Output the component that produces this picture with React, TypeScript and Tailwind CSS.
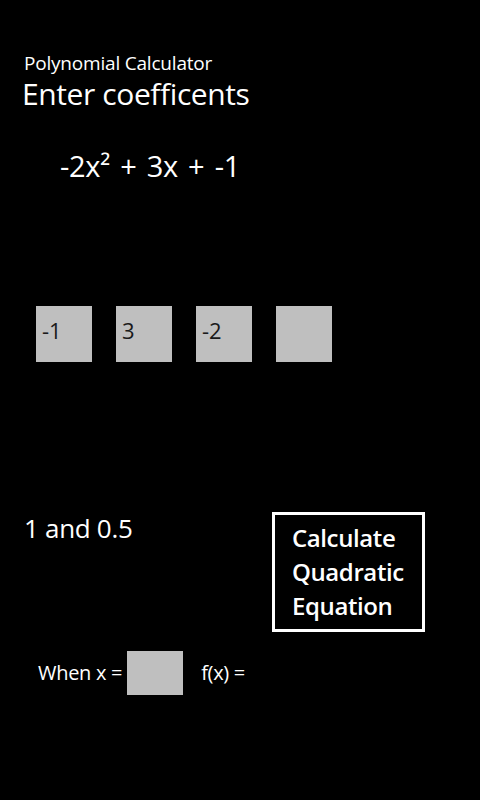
export default function App() {
  const coeffs = ["-1", "3", "-2", ""];
  return (
    <div
      className="w-[480px] h-[800px] bg-black text-white overflow-hidden"
      style={{ fontFamily: '"Open Sans", "Noto Sans", sans-serif' }}
    >
      <div className="pt-[50px] pl-6">
        <div className="text-[19px] leading-[26px] tracking-[-0.2px]">Polynomial Calculator</div>
        <div className="text-[30px] leading-[36px] -ml-[2px] tracking-[-0.4px]">Enter coefficents</div>
      </div>

      <div className="pl-[60px] mt-[36px] text-[29px] leading-[36px] tracking-[-0.3px] [word-spacing:3px]">
        -2x² + 3x + -1
      </div>

      <div className="flex gap-6 pl-9 mt-[122px]">
        {coeffs.map((c, i) => (
          <div
            key={i}
            className="w-14 h-14 bg-[#bfbfbf] text-[#1a1a1a] text-[22px] leading-[30px] pl-[6px] pt-[9px]"
          >
            {c}
          </div>
        ))}
      </div>

      <div className="flex items-start mt-[150px] pl-6">
        <div className="text-[26px] leading-[32px] tracking-[-0.3px]">1 and 0.5</div>
        <div className="ml-auto mr-[55px] w-[153px] h-[120px] border-[3px] border-white pl-[17px] pt-[6px] text-[24px] leading-[34px] font-semibold tracking-[-0.4px]">
          Calculate
          <br />
          Quadratic
          <br />
          Equation
        </div>
      </div>

      <div className="flex items-center mt-[19px] pl-[38px] text-[20px]">
        <span className="tracking-[-0.3px]">When x =</span>
        <div className="w-14 h-11 bg-[#bfbfbf] ml-[5px]" />
        <span className="ml-[18px] tracking-[-0.3px]">f(x) =</span>
      </div>
    </div>
  );
}
